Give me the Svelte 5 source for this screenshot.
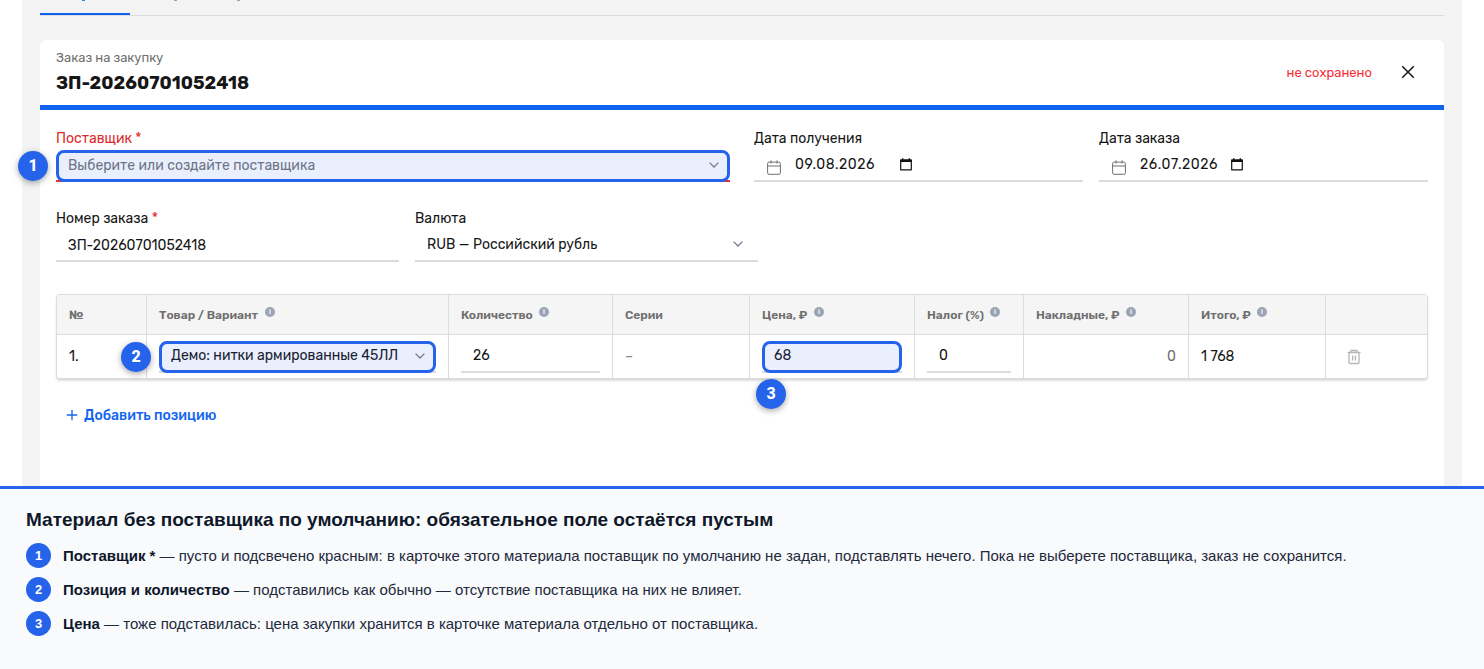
<script lang="ts">
  // Purchase order form with numbered callouts and a legend below it.

  interface Column {
    title: string;
    hint?: boolean;
  }

  const orderNumber = 'ЗП-20260701052418';

  const columns: Column[] = [
    { title: '№' },
    { title: 'Товар / Вариант', hint: true },
    { title: 'Количество', hint: true },
    { title: 'Серии' },
    { title: 'Цена, ₽', hint: true },
    { title: 'Налог (%)', hint: true },
    { title: 'Накладные, ₽', hint: true },
    { title: 'Итого, ₽', hint: true },
    { title: '' },
  ];

  const notes = [
    {
      term: 'Поставщик *',
      text: 'пусто и подсвечено красным: в карточке этого материала поставщик по умолчанию не задан, подставлять нечего. Пока не выберете поставщика, заказ не сохранится.',
    },
    {
      term: 'Позиция и количество',
      text: 'подставились как обычно — отсутствие поставщика на них не влияет.',
    },
    {
      term: 'Цена',
      text: 'тоже подставилась: цена закупки хранится в карточке материала отдельно от поставщика.',
    },
  ];
</script>

{#snippet chevron()}
  <svg class="chevron" width="10" height="6" viewBox="0 0 10 6">
    <path d="M0.6 0.6 L5 5 L9.4 0.6" fill="none" stroke="currentColor" stroke-width="1.3" />
  </svg>
{/snippet}

{#snippet dateField(label: string, value: string, wide: boolean)}
  <div class="field">
    <span class="label">{label}</span>
    <div class="input date">
      <svg class="calendar" width="14" height="15" viewBox="0 0 14 15">
        <rect x="0.6" y="2.1" width="12.8" height="12.2" rx="1.5" fill="none" stroke="currentColor" />
        <path d="M0.6 6H13.4M4 0.4V3.6M10 0.4V3.6" fill="none" stroke="currentColor" />
      </svg>
      <span class="date-value" class:wide>{value}</span>
      <svg class="picker" width="12" height="13" viewBox="0 0 12 13">
        <path d="M0.7 2H11.3V11.8H0.7Z" fill="none" stroke="#111" stroke-width="1.2" stroke-linejoin="round" />
        <path d="M0.3 1.5H11.7V4H0.3ZM2 0.2H3.4V2H2ZM8.6 0.2H10V2H8.6Z" fill="#111" />
      </svg>
    </div>
  </div>
{/snippet}

<div class="page">
  <div class="workspace">
    <nav class="tabs">
      <span class="tab active"><i></i></span>
      <span class="tab"><i></i><i></i></span>
    </nav>

    <section class="card">
      <header class="head">
        <div>
          <div class="kind">Заказ на закупку</div>
          <h1>{orderNumber}</h1>
        </div>
        <div class="status">
          <span class="unsaved">не сохранено</span>
          <svg width="14" height="14" viewBox="0 0 14 14">
            <path d="M1.2 1.2L12.8 12.8M12.8 1.2L1.2 12.8" stroke="#161616" stroke-width="1.5" />
          </svg>
        </div>
      </header>

      <div class="form">
        <div class="row top">
          <div class="field">
            <span class="label invalid">Поставщик <b>*</b></span>
            <div class="input error">
              <div class="ring placeholder"><span>Выберите или создайте поставщика</span>{@render chevron()}</div>
              <span class="badge left">1</span>
            </div>
          </div>
          <div class="dates">
            {@render dateField('Дата получения', '09.08.2026', true)}
            {@render dateField('Дата заказа', '26.07.2026', false)}
          </div>
        </div>

        <div class="row second">
          <div class="field">
            <span class="label">Номер заказа <b>*</b></span>
            <div class="input number">{orderNumber}</div>
          </div>
          <div class="field">
            <span class="label">Валюта</span>
            <div class="input currency"><span>RUB — Российский рубль</span>{@render chevron()}</div>
          </div>
        </div>

        <div class="table">
          {#each columns as column}
            <div class="th">
              {column.title}
              {#if column.hint}
                <svg class="hint" width="10" height="10" viewBox="0 0 10 10">
                  <circle cx="5" cy="5" r="5" fill="#9aa4b5" />
                  <path d="M5 2.2V7" stroke="#f3f4f6" stroke-width="1.2" />
                </svg>
              {/if}
            </div>
          {/each}

          <div class="td">1.</div>
          <div class="td">
            <div class="input cell">
              <div class="ring"><span>Демо: нитки армированные 45ЛЛ</span>{@render chevron()}</div>
              <span class="badge left">2</span>
            </div>
          </div>
          <div class="td"><div class="input cell plain">26</div></div>
          <div class="td muted">–</div>
          <div class="td">
            <div class="input cell">
              <div class="ring">68</div>
              <span class="badge below">3</span>
            </div>
          </div>
          <div class="td"><div class="input cell plain">0</div></div>
          <div class="td overhead">0</div>
          <div class="td">1 768</div>
          <div class="td trash">
            <svg width="14" height="16" viewBox="0 0 14 16">
              <path
                d="M0.5 3.5H13.5M4 3.3V1.5H10V3.3M2 3.5V13.4Q2 14.5 3 14.5H11Q12 14.5 12 13.4V3.5M5.6 6.6V11.6M8.4 6.6V11.6"
                fill="none"
                stroke="currentColor"
                stroke-width="1.3"
              />
            </svg>
          </div>
        </div>

        <div class="add">
          <svg width="12" height="12" viewBox="0 0 12 12">
            <path d="M6 0.8V11.2M0.8 6H11.2" stroke="currentColor" stroke-width="1.3" />
          </svg>
          <span>Добавить позицию</span>
        </div>
      </div>
    </section>
  </div>

  <footer class="legend">
    <h2>Материал без поставщика по умолчанию: обязательное поле остаётся пустым</h2>
    {#each notes as note, i}
      <div class="note">
        <span class="dot">{i + 1}</span>
        <p><strong>{note.term}</strong> — {note.text}</p>
      </div>
    {/each}
  </footer>
</div>

<style>
  :global(body) {
    background: #fff;
  }

  .page {
    height: 669px;
    display: flex;
    flex-direction: column;
    overflow: hidden;
    box-sizing: border-box;
    font-family: Rubik, Inter, sans-serif;
    font-size: 14px;
    color: #161616;
  }

  .page * {
    box-sizing: border-box;
  }

  .workspace {
    height: 486px;
    flex: none;
    margin: 0 22px;
    padding: 0 18px;
    background: #f3f3f3;
  }

  .tabs {
    display: flex;
    height: 16px;
    border-bottom: 1px solid #dcdcdc;
  }

  .tab {
    display: flex;
    gap: 60px;
    height: 15px;
    padding-left: 44px;
    color: #8a8a8a;
  }

  .tab i {
    width: 3px;
    height: 1px;
    background: currentColor;
    opacity: 0.8;
  }

  .tab.active {
    width: 90px;
    padding-left: 42px;
    border-bottom: 2px solid #0f62f0;
    color: #0f62f0;
  }

  .card {
    height: 446px;
    margin-top: 24px;
    background: #fff;
    border-radius: 6px 6px 0 0;
  }

  .head {
    display: flex;
    justify-content: space-between;
    height: 70px;
    padding: 9px 29px 0 16px;
    border-bottom: 5px solid #0f65f0;
  }

  .kind {
    font-size: 13px;
    line-height: 18px;
    color: #6f6f6f;
  }

  h1 {
    margin: 4px 0 0;
    font-size: 18px;
    line-height: 24px;
    font-weight: 700;
  }

  .status {
    display: flex;
    align-items: center;
    gap: 29px;
    height: 46px;
  }

  .unsaved {
    font-size: 13px;
    color: #fa2d37;
  }

  .form {
    padding: 18px 16px 0;
  }

  .row {
    display: grid;
  }

  .top {
    grid-template-columns: 1fr 1fr;
    gap: 24px;
  }

  .dates {
    display: grid;
    grid-template-columns: 1fr 1fr;
    gap: 16px;
  }

  .second {
    grid-template-columns: 343px 343px;
    gap: 16px;
    margin-top: 26px;
  }

  .label {
    display: block;
    height: 22px;
    line-height: 22px;
    white-space: nowrap;
  }

  .label b {
    font-weight: 400;
    color: #e8302a;
  }

  .invalid {
    color: #e02b2b;
  }

  .input {
    position: relative;
    height: 32px;
    border-bottom: 2px solid #dcdcdc;
    white-space: nowrap;
  }

  .input.error {
    border-bottom-color: #f0302f;
  }

  .chevron {
    flex: none;
    color: #75798a;
  }

  .ring {
    display: flex;
    align-items: center;
    justify-content: space-between;
    height: 32px;
    padding: 0 8px 2px 9px;
    border: 3px solid #2563eb;
    border-radius: 8px;
    background: #e9effd;
    color: #1a2133;
  }

  .placeholder {
    color: #6d7486;
  }

  .badge {
    position: absolute;
    width: 30px;
    height: 30px;
    border-radius: 50%;
    background: #2563eb;
    box-shadow: 0 2px 6px rgba(0, 0, 0, 0.35);
    color: #fff;
    font-family: Roboto, sans-serif;
    font-size: 16px;
    font-weight: 800;
    line-height: 30px;
    text-align: center;
  }

  .badge.left {
    left: -38px;
    top: 1px;
  }

  .badge.below {
    left: -6px;
    top: 38px;
  }

  .date {
    display: flex;
    align-items: flex-start;
    padding-left: 13px;
  }

  .calendar {
    margin-top: 10px;
    color: #6f6f6f;
  }

  .date-value {
    width: 91px;
    margin-left: 14px;
    line-height: 30px;
    letter-spacing: 0.55px;
  }

  .date-value.wide {
    width: 105px;
  }

  .picker {
    margin-top: 8px;
  }

  .number {
    padding-left: 12px;
    line-height: 32px;
  }

  .currency {
    display: flex;
    align-items: center;
    justify-content: space-between;
    padding: 0 15px 2px 12px;
  }

  .table {
    display: grid;
    grid-template-columns: 90px 302px 164px 137px 165px 109px 165px 137px 101px;
    grid-template-rows: 40px 43px;
    height: 86px;
    margin-top: 32px;
    border: 1px solid #dcdcdc;
    border-bottom-width: 2px;
    border-radius: 4px;
    box-shadow: 0 1px 2px rgba(0, 0, 0, 0.12);
  }

  .th,
  .td {
    display: flex;
    align-items: center;
    padding: 0 12px;
    border-right: 1px solid #dcdcdc;
    white-space: nowrap;
  }

  .th {
    border-bottom: 1px solid #dcdcdc;
    background: #f5f5f5;
    color: #6f6f6f;
    font-size: 12px;
    font-weight: 600;
  }

  .th:nth-child(9n),
  .td:nth-child(9n) {
    border-right: 0;
  }

  .hint {
    margin: 0 0 5px 6.5px;
  }

  .cell {
    flex: 1;
    min-width: 0;
  }

  .plain {
    padding-left: 12px;
    line-height: 30px;
  }

  .muted {
    color: #8d8d8d;
  }

  .overhead {
    justify-content: flex-end;
    color: #6f6f6f;
  }

  .trash {
    padding-left: 21px;
    color: #b5b5b5;
  }

  .add {
    display: flex;
    align-items: center;
    gap: 6px;
    height: 20px;
    margin: 25px 0 0 10px;
    color: #1266f1;
    font-weight: 500;
  }

  .legend {
    flex: 1;
    padding: 19px 26px 0;
    border-top: 3px solid #2563eb;
    background: #f8fafc;
    color: #1e293b;
    font-family: "Liberation Sans", Arial, sans-serif;
    font-size: 15px;
  }

  h2 {
    margin: 0 0 12px;
    color: #0f172a;
    font-size: 19px;
    line-height: 23px;
    font-weight: 700;
    white-space: nowrap;
  }

  .note {
    display: flex;
    align-items: center;
    gap: 12px;
    height: 25px;
    margin-bottom: 9px;
  }

  .note p {
    margin: 0;
    white-space: nowrap;
  }

  .note strong {
    color: #0f172a;
  }

  .dot {
    width: 25px;
    height: 25px;
    border-radius: 50%;
    background: #2563eb;
    color: #fff;
    font-size: 13px;
    font-weight: 700;
    line-height: 25px;
    text-align: center;
  }
</style>
